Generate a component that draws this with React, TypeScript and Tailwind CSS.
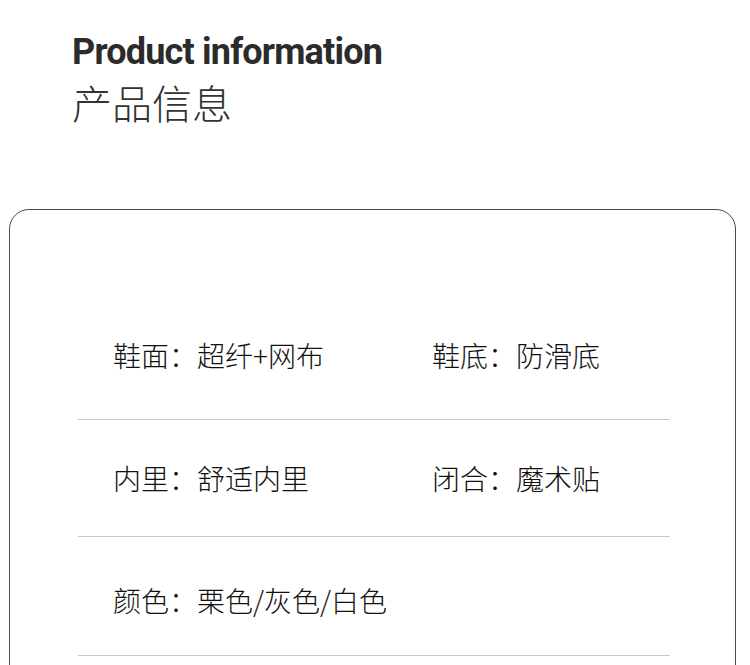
const rows = [
  { left: "鞋面：超纤+网布", right: "鞋底：防滑底", cls: "pt-[131px] pb-[50px]" },
  { left: "内里：舒适内里", right: "闭合：魔术贴", cls: "pt-[44px] pb-[44px]" },
  { left: "颜色：栗色/灰色/白色", right: "", cls: "pt-[49px] pb-[41px]" },
];

export default function App() {
  return (
    <div className="w-[750px] h-[665px] overflow-hidden bg-white [font-family:'Noto_Sans_CJK_SC','Noto_Sans',sans-serif]">
      {/* Heading */}
      <div className="pl-[72px] pt-[30px]">
        <h1 className="text-[36px] leading-[44px] font-bold tracking-[-0.8px] text-[#2b2b2b] [font-family:Roboto,'Noto_Sans_CJK_SC',sans-serif]">
          Product information
        </h1>
        <h2 className="mt-[4px] text-[40px] leading-[48px] font-light text-[#333]">产品信息</h2>
      </div>

      {/* Spec card */}
      <div className="mt-[83px] ml-[9px] w-[727px] h-[600px] rounded-[20px] border border-[#4a4a4a]">
        {rows.map((r) => (
          <div key={r.left} className="ml-[68px] w-[592px] border-b border-[#c8c8c8]">
            <div className={`grid grid-cols-[319px_1fr] pl-[35px] text-[28px] leading-[28px] font-light text-[#111] ${r.cls}`}>
              <span>{r.left}</span>
              <span>{r.right}</span>
            </div>
          </div>
        ))}
      </div>
    </div>
  );
}
